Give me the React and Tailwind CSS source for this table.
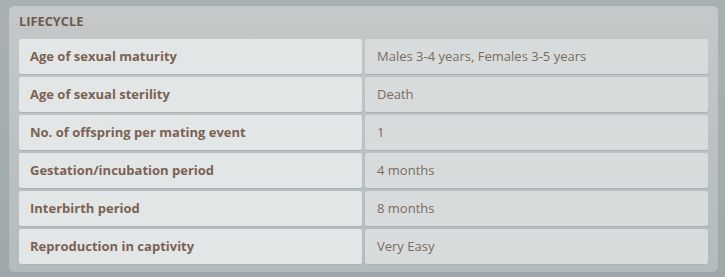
import React from 'react';

const rows = [
  ['Age of sexual maturity', 'Males 3-4 years, Females 3-5 years'],
  ['Age of sexual sterility', 'Death'],
  ['No. of offspring per mating event', '1'],
  ['Gestation/incubation period', '4 months'],
  ['Interbirth period', '8 months'],
  ['Reproduction in captivity', 'Very Easy'],
];

const App = () => {
  return (
    <div
      className="w-[725px] h-[277px] bg-gradient-to-b from-[#a9b0b2] to-[#9ea8ab] pt-[6px] pl-[9px] pr-[7px] pb-[5px]"
      style={{ fontFamily: '"Open Sans", "Noto Sans", sans-serif' }}
    >
      <div className="h-full rounded-[5px] bg-gradient-to-b from-[#c4c8c9] to-[#b3bbbd] pt-[6px] px-[10px] pb-[8px]">
        <h2 className="text-[12.8px] leading-[19px] font-bold text-[#6e5a4d]">LIFECYCLE</h2>
        <div className="mt-[8px] flex flex-col gap-[3px]">
          {rows.map(([label, value], i) => (
            <div key={i} className="flex gap-[3px] h-[35px]">
              <div className="w-[343px] rounded-[2px] bg-[#e3e6e7] shadow-[0_1px_0_#a9b1b3] flex items-center pl-[11px] pt-[1px] text-[13px] font-bold text-[#7b6252]">
                {label}
              </div>
              <div className="flex-1 rounded-[2px] bg-[#d7dbdc] shadow-[0_1px_0_#a9b1b3] flex items-center pl-[12px] pt-[1px] text-[13px] text-[#7b6b5f]">
                {value}
              </div>
            </div>
          ))}
        </div>
      </div>
    </div>
  );
};

export default App;
